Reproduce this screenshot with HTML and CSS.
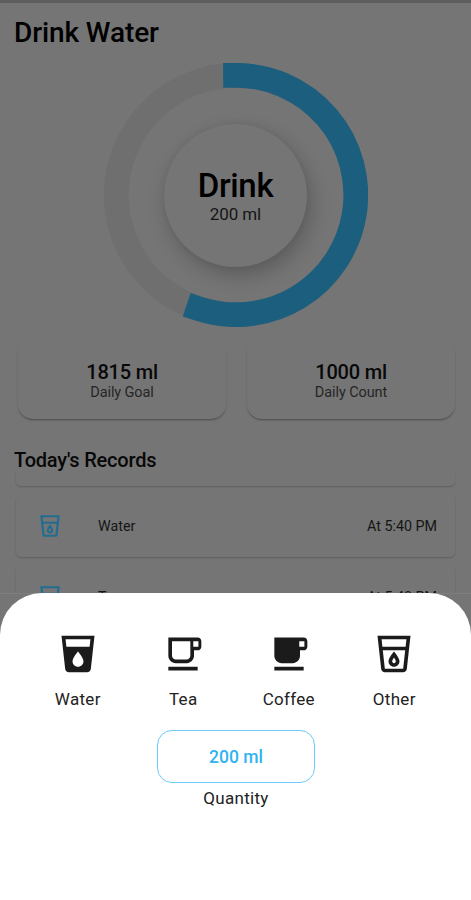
FILE: index.html
```html
<!DOCTYPE html>
<html lang="en">
<head>
<meta charset="utf-8">
<title>Drink Water</title>
<link rel="stylesheet" href="styles.css">
</head>
<body>
<svg class="defs" aria-hidden="true">
  <symbol id="glass" viewBox="0 0 24 24"><path d="M3 2l2.01 18.23C5.13 21.23 5.97 22 7 22h10c1.03 0 1.87-.77 1.99-1.77L21 2H3zm14 18l-10 .01L5.89 10H18.1L17 20zm1.33-12H5.67l-.44-4h13.55l-.45 4zM12 19c1.66 0 3-1.34 3-3 0-2-3-5.4-3-5.4S9 14 9 16c0 1.66 1.34 3 3 3zm0-5.09c.59.91 1 1.73 1 2.09 0 .55-.45 1-1 1s-1-.45-1-1c0-.37.41-1.19 1-2.09z"/></symbol>
  <symbol id="glass-full" viewBox="0 0 24 24"><path d="M3 2l2.01 18.23C5.13 21.23 5.97 22 7 22h10c1.03 0 1.87-.77 1.99-1.77L21 2H3zm9 17c-1.66 0-3-1.34-3-3 0-2 3-5.4 3-5.4s3 3.4 3 5.4c0 1.66-1.34 3-3 3zm6.33-11H5.67l-.44-4h13.55l-.45 4z"/></symbol>
  <symbol id="cup" viewBox="0 0 24 24"><path d="M20 3H4v10c0 2.21 1.79 4 4 4h6c2.21 0 4-1.79 4-4v-3h2c1.11 0 2-.9 2-2V5c0-1.11-.89-2-2-2zm-4 10c0 1.1-.9 2-2 2H8c-1.1 0-2-.9-2-2V5h10v8zm4.4-5h-2.8V5h2.8v3zM4 19h16v2H4z"/></symbol>
  <symbol id="cup-full" viewBox="0 0 24 24"><path d="M20 3H4v10c0 2.21 1.79 4 4 4h6c2.21 0 4-1.79 4-4v-3h2c1.11 0 2-.9 2-2V5c0-1.11-.89-2-2-2zm.4 5h-2.8V5h2.8v3zM4 19h16v2H4z"/></symbol>
</svg>
<main class="screen">
  <h1 class="title">Drink Water</h1>
  <section class="gauge">
    <svg class="ring" viewBox="0 0 264 264">
      <circle class="track" cx="132" cy="132" r="119.7"/>
      <path class="progress" d="M131.5 12.3A119.7 119.7 0 1 1 94.4 245.6"/>
    </svg>
    <button class="drink"><strong>Drink</strong><span>200 ml</span></button>
  </section>
  <section class="stats">
    <div class="stat"><strong>1815 ml</strong><span>Daily Goal</span></div>
    <div class="stat"><strong>1000 ml</strong><span>Daily Count</span></div>
  </section>
  <h2 class="subtitle">Today's Records</h2>
  <section class="records">
    <div class="record record-first"></div>
    <div class="record"><svg><use href="#glass"/></svg><span>Water</span><time>At 5:40 PM</time></div>
    <div class="record"><svg><use href="#glass"/></svg><span>Tea</span><time>At 5:40 PM</time></div>
  </section>
  <section class="sheet">
    <div class="options">
      <div class="option"><svg><use href="#glass-full"/></svg><span>Water</span></div>
      <div class="option"><svg><use href="#cup"/></svg><span>Tea</span></div>
      <div class="option"><svg><use href="#cup-full"/></svg><span>Coffee</span></div>
      <div class="option"><svg><use href="#glass"/></svg><span>Other</span></div>
    </div>
    <button class="quantity">200 ml</button>
    <span class="caption">Quantity</span>
  </section>
</main>
</body>
</html>
```
FILE: styles.css
```css
* { box-sizing: border-box; }
body { margin: 0; font-family: Roboto, sans-serif; color: #080808; }
button { font: inherit; color: inherit; padding: 0; }
.defs { display: none; }
.screen {
  position: relative;
  height: 900px;
  overflow: hidden;
  background: #757575;
  border-top: 3px solid #5d5d5d;
}
.title { margin: 12px 0 0 14px; font-size: 28px; line-height: 36px; font-weight: 500; letter-spacing: -0.1px; color: #000; }
.gauge { display: grid; place-items: center; width: 264px; height: 264px; margin: 12px auto 0; }
.gauge > * { grid-area: 1 / 1; }
.ring { width: 264px; height: 264px; fill: none; stroke-width: 24.7px; }
.track { stroke: #6f6f6f; }
.progress { stroke: #1c5e7d; stroke-linecap: square; }
.drink {
  display: flex; flex-direction: column; align-items: center;
  width: 143px; height: 143px; padding-top: 43px;
  border: 0; border-radius: 50%;
  background: #757575;
  box-shadow: 4px 8px 20px rgba(0, 0, 0, .22), 0 0 6px rgba(0, 0, 0, .05);
}
.drink strong { font-size: 33px; line-height: 38px; font-weight: 500; letter-spacing: -.3px; color: #000; }
.drink span { font-size: 17px; line-height: 18px; letter-spacing: -.1px; color: #151515; }
.stats { display: flex; gap: 21px; height: 78px; margin-top: 20px; padding: 0 16px 0 18px; overflow: hidden; }
.stat {
  display: flex; flex-direction: column; align-items: center;
  flex: 1; height: 72px; padding-top: 13px;
  border-radius: 4px 4px 15px 15px;
  background: #757575;
  box-shadow: 0 2px 2px -1px rgba(0, 0, 0, .3), 0 1px 3px rgba(0, 0, 0, .08);
}
.stat strong { font-size: 20px; line-height: 24px; font-weight: 500; letter-spacing: -.2px; }
.stat span { font-size: 14.5px; line-height: 18px; letter-spacing: -.1px; color: #252525; }
.subtitle { margin: 23px 0 0 14px; font-size: 20px; line-height: 24px; font-weight: 500; letter-spacing: -.2px; }
.records { display: flex; flex-direction: column; gap: 9px; height: 122px; padding: 0 16px; overflow: hidden; border-bottom: 1px solid #7e7e7e; }
.record {
  display: flex; align-items: center; flex: none; height: 62px; padding: 0 18px 0 21px;
  border-radius: 5px;
  background: #757575;
  box-shadow: 0 1px 2px rgba(0, 0, 0, .2);
  font-size: 14.3px; color: #151515;
}
.record-first { height: 14px; border-radius: 0 0 5px 5px; }
.record svg { width: 26px; height: 26px; margin-right: 35px; fill: #216d91; }
.record time { margin-left: auto; }
.sheet {
  position: absolute; inset: auto 0 0; height: 307px;
  display: flex; flex-direction: column; align-items: center;
  padding: 39px 24px 0 25px;
  background: #fff; border-radius: 42px 42px 0 0;
}
.options { display: flex; align-self: stretch; }
.option { display: flex; flex: 1; flex-direction: column; align-items: center; }
.option svg { width: 44px; height: 44px; fill: #1b1b1b; }
.option span { margin-top: 13px; font-size: 17px; line-height: 20px; letter-spacing: .3px; color: #222; }
.quantity {
  width: 158px; height: 53px; margin-top: 21px;
  border: 1px solid #6ccbf8; border-radius: 15px; background: #fff;
  font-size: 17.5px; line-height: 20px; font-weight: 500; color: #2fb4f0;
}
.caption { margin-top: 5px; font-size: 17px; line-height: 20px; letter-spacing: .3px; color: #222; }
```
